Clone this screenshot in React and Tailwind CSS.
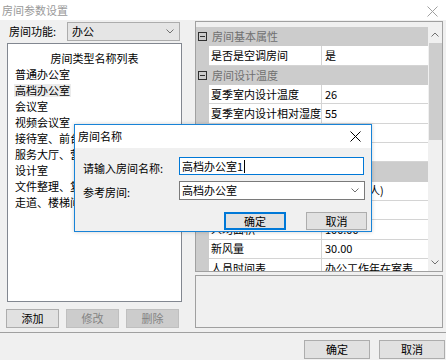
import React from "react";

const font = "font-['Noto_Sans_CJK_SC','Microsoft_YaHei',sans-serif]";

function Chevron({ className = "" }) {
  return (
    <svg width="8" height="5" viewBox="0 0 8 5" className={className}>
      <polyline points="0.5,0.5 4,4 7.5,0.5" fill="none" stroke="#707070" strokeWidth="1" />
    </svg>
  );
}

function CloseX({ color = "#000" }) {
  return (
    <svg width="11" height="11" viewBox="0 0 11 11">
      <line x1="0.5" y1="0.5" x2="10.5" y2="10.5" stroke={color} strokeWidth="1" />
      <line x1="10.5" y1="0.5" x2="0.5" y2="10.5" stroke={color} strokeWidth="1" />
    </svg>
  );
}

const roomTypes = [
  "普通办公室",
  "高档办公室",
  "会议室",
  "视频会议室",
  "接待室、前台",
  "服务大厅、营业厅",
  "设计室",
  "文件整理、复印室",
  "走道、楼梯间",
];

const props = [
  { cat: "房间基本属性" },
  { name: "是否是空调房间", value: "是" },
  { cat: "房间设计温度" },
  { name: "夏季室内设计温度", value: "26" },
  { name: "夏季室内设计相对湿度", value: "55" },
  { name: "冬季室内设计温度", value: "20" },
  { name: "冬季室内设计相对湿度", value: "" },
  { cat: "房间负荷" },
  { name: "人员密度", value: "8.00(m²/人)" },
  { name: "照明功率密度", value: "" },
  { name: "人均面积", value: "100.00" },
  { name: "新风量", value: "30.00" },
  { name: "人员时间表", value: "办公工作年在室表" },
];

function PropRow({ row }) {
  if (row.cat) {
    return (
      <div className="flex items-center h-[19.33px] bg-[#cccccc] shrink-0">
        <div className="w-[13px] flex justify-center items-center">
          <div className="w-[9px] h-[9px] border border-[#303030] flex items-center justify-center">
            <div className="w-[5px] h-px bg-[#303030]" />
          </div>
        </div>
        <span className="ml-[3px] text-[#707070]">{row.cat}</span>
      </div>
    );
  }
  return (
    <div className="flex h-[19.33px] shrink-0">
      <div className="w-[13px] bg-[#cccccc]" />
      <div className="w-[113px] bg-white border-r border-b border-[#d4d4d4] pl-[2px] overflow-hidden whitespace-nowrap flex items-center">
        {row.name}
      </div>
      <div className="flex-1 bg-white border-b border-[#d4d4d4] pl-[3px] overflow-hidden whitespace-nowrap flex items-center">
        {row.value}
      </div>
    </div>
  );
}

function WinButton({ children, disabled, className = "" }) {
  return (
    <div
      className={
        "h-[19px] flex items-center justify-center border " +
        (disabled
          ? "bg-[#cccccc] border-[#bfbfbf] text-[#838383] "
          : "bg-[#e1e1e1] border-[#adadad] text-black ") +
        className
      }
    >
      {children}
    </div>
  );
}

export default function App() {
  return (
    <div className={"relative w-[446px] h-[360px] overflow-hidden bg-[#f0f0f0] text-[11px] leading-none text-black " + font}>
      {/* title bar */}
      <div className="h-[20px] bg-white flex items-center justify-between">
        <span className="pl-[2px] text-[#9a9a9a]">房间参数设置</span>
        <div className="pr-[8px] pt-[2px]">
          <CloseX color="#a0a0a0" />
        </div>
      </div>

      {/* main */}
      <div className="flex h-[312px]">
        {/* left */}
        <div className="pl-[6px] w-[181px] flex flex-col">
          <div className="mt-[2px] flex items-center h-[19px]">
            <span className="pl-[3px] w-[61px]">房间功能:</span>
            <div className="w-[113px] h-[19px] bg-[#e5e5e5] border border-[#acacac] flex items-center justify-between pl-[4px] pr-[5px]">
              <span>办公</span>
              <Chevron />
            </div>
          </div>
          <div className="mt-[2px] ml-px w-[175px] h-[259px] bg-white border border-[#828790]">
            <div className="mt-[7px] h-[15px] flex items-center justify-center">房间类型名称列表</div>
            <div className="flex flex-col pl-[6px]">
              {roomTypes.map((t, i) => (
                <div key={t} className="h-[16px] flex items-center">
                  <span className={"px-px py-px whitespace-nowrap " + (i === 1 ? "bg-[#ebebeb]" : "")}>{t}</span>
                </div>
              ))}
            </div>
          </div>
          <div className="mt-[7px] flex gap-[7px]">
            <WinButton className="w-[53px]">添加</WinButton>
            <WinButton className="w-[53px]" disabled>修改</WinButton>
            <WinButton className="w-[53px]" disabled>删除</WinButton>
          </div>
        </div>

        {/* right */}
        <div className="ml-[14px] w-[248px] flex flex-col">
          <div className="mt-px h-[251px] border border-[#a0a0a0] pt-[5px] flex overflow-hidden">
            <div className="w-[232px] flex flex-col overflow-hidden">
              {props.map((r, i) => (
                <PropRow key={i} row={r} />
              ))}
            </div>
            <div className="w-[14px] flex flex-col items-center bg-[#f0f0f0]">
              <div className="h-[14px] flex items-center justify-center">
                <Chevron className="rotate-180" />
              </div>
              <div className="mt-[2px] w-[13px] h-[97px] bg-[#cdcdcd]" />
              <div className="flex-1" />
              <div className="h-[14px] mb-[2px] flex items-center justify-center">
                <Chevron />
              </div>
            </div>
          </div>
          <div className="mt-[3px] h-[53px] border border-[#a0a0a0] bg-[#f0f0f0]" />
        </div>
      </div>

      {/* separator */}
      <div className="h-px bg-[#a0a0a0]" />

      {/* bottom buttons */}
      <div className="flex justify-end gap-[9px] pr-px mt-[7px]">
        <WinButton className="w-[66px]">确定</WinButton>
        <WinButton className="w-[66px]">取消</WinButton>
      </div>

      {/* modal dialog */}
      <div className="absolute left-[74px] top-[124px] w-[298px] h-[108px] border border-[#1883d7] bg-[#f0f0f0] flex flex-col shadow-[0_0_4px_rgba(0,0,0,0.2)]">
        <div className="h-[23px] bg-white flex items-center justify-between">
          <span className="pl-[3px]">房间名称</span>
          <div className="pr-[10px]">
            <CloseX />
          </div>
        </div>
        <div className="flex items-center mt-[9px] h-[18px]">
          <span className="pl-[8px] w-[104px] pt-[4px]">请输入房间名称:</span>
          <div className="w-[185px] h-[18px] bg-white border border-[#0078d7] flex items-center pl-[2px]">
            <span>高档办公室1</span>
            <span className="ml-px w-px h-[13px] bg-black" />
          </div>
        </div>
        <div className="flex items-center mt-[6px] h-[19px]">
          <span className="pl-[8px] w-[104px] pt-[4px]">参考房间:</span>
          <div className="w-[186px] h-[19px] bg-white border border-[#7a7a7a] flex items-center justify-between pl-[2px] pr-[5px]">
            <span>高档办公室</span>
            <Chevron />
          </div>
        </div>
        <div className="flex mt-[12px] pl-[149px] gap-[20px]">
          <div className="w-[62px] h-[18px] bg-[#e1e1e1] border-2 border-[#0078d7] flex items-center justify-center">确定</div>
          <div className="w-[61px] h-[18px] bg-[#e1e1e1] border border-[#adadad] flex items-center justify-center">取消</div>
        </div>
      </div>
    </div>
  );
}
